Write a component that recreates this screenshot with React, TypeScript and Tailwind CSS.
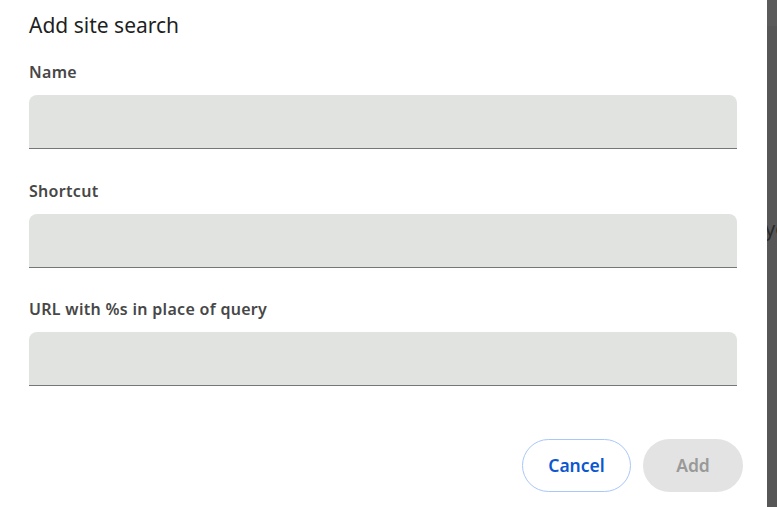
import React from "react";

function Field({ label }: { label: string }) {
  return (
    <div className="flex flex-col">
      <div className="text-[16px] leading-[20px] font-semibold tracking-[0.3px] text-[#474747] h-[20px]">{label}</div>
      <div className="mt-[13px] h-[54px] rounded-t-[8px] bg-[#e1e3e1] border-b border-[#747775]" />
    </div>
  );
}

export default function App() {
  return (
    <div
      className="w-[777px] h-[507px] flex overflow-hidden"
      style={{ fontFamily: '"Noto Sans", "Open Sans", Arial, sans-serif' }}
    >
      <div className="flex-1 bg-white pl-[29px] pr-[30px] flex flex-col">
        <h1 className="mt-[10px] text-[21px] leading-[30px] font-normal text-[#1f1f1f]">Add site search</h1>
        <div className="mt-[22px] flex flex-col gap-[31.5px]">
          <Field label="Name" />
          <Field label="Shortcut" />
          <Field label="URL with %s in place of query" />
        </div>
        <div className="mt-[53px] flex justify-end gap-[13px]">
          <button className="w-[109px] h-[53px] -mr-[1px] rounded-full border border-[#a8c7fa] bg-white text-[#0b57d0] text-[17.5px] font-semibold">
            Cancel
          </button>
          <button className="w-[100px] h-[53px] -mr-[6px] rounded-full bg-[#e3e3e3] text-[#999999] text-[17.5px] font-semibold">
            Add
          </button>
        </div>
      </div>
      <div className="w-[10px] h-full bg-[#575757] relative overflow-hidden flex flex-col">
        <div className="h-[26px] bg-[#5b5b5b]" />
        <div className="absolute left-[-2px] top-[217px] text-[20px] leading-[24px] text-[#2a2a2a]">yo</div>
      </div>
    </div>
  );
}
